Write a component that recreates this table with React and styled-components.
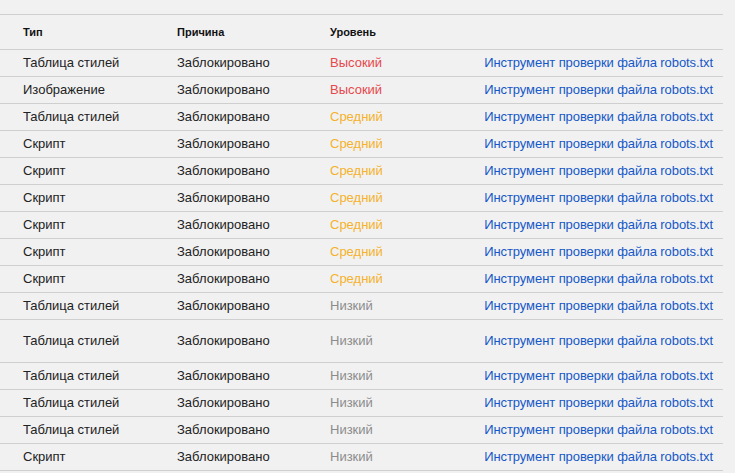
import React from "react";
import styled, { createGlobalStyle } from "styled-components";

const GlobalStyle = createGlobalStyle`
  body {
    margin: 0;
    background: #f1f1f1;
    font-family: "Liberation Sans", Arial, sans-serif;
  }
`;

const Wrapper = styled.div`
  width: 723px;
  padding-top: 14px;
`;

const Table = styled.table`
  width: 100%;
  border-collapse: collapse;
  border-top: 1px solid #cfcfcf;
  font-size: 13px;
  color: #222;
`;

const HeadCell = styled.th`
  height: 34px;
  padding: 0;
  padding-left: ${({ first }) => (first ? "23px" : "0")};
  text-align: left;
  font-size: 11px;
  font-weight: bold;
  color: #111;
  width: ${({ w }) => w || "auto"};
`;

const Row = styled.tr`
  border-top: 1px solid #cfcfcf;
  border-bottom: 1px solid #cfcfcf;
  height: ${({ tall }) => (tall ? "43px" : "27px")};
`;

const Cell = styled.td`
  padding: 0 0 2px;
  padding-left: ${({ first }) => (first ? "23px" : "0")};
  vertical-align: middle;
`;

const levelColors = {
  "Высокий": "#e8474c",
  "Средний": "#f5b22c",
  "Низкий": "#8c8c8c",
};

const Level = styled(Cell)`
  color: ${({ level }) => levelColors[level]};
`;

const LinkCell = styled(Cell)`
  text-align: right;
  padding-right: 10px;
`;

const Link = styled.a`
  color: #1558c8;
  text-decoration: none;
  letter-spacing: -0.08px;
`;

const rows = [
  ["Таблица стилей", "Высокий"],
  ["Изображение", "Высокий"],
  ["Таблица стилей", "Средний"],
  ["Скрипт", "Средний"],
  ["Скрипт", "Средний"],
  ["Скрипт", "Средний"],
  ["Скрипт", "Средний"],
  ["Скрипт", "Средний"],
  ["Скрипт", "Средний"],
  ["Таблица стилей", "Низкий"],
  ["Таблица стилей", "Низкий", true],
  ["Таблица стилей", "Низкий"],
  ["Таблица стилей", "Низкий"],
  ["Таблица стилей", "Низкий"],
  ["Скрипт", "Низкий"],
];

const App = () => {
  return (
    <Wrapper>
      <GlobalStyle />
      <Table>
        <thead>
          <tr>
            <HeadCell first w="154px">Тип</HeadCell>
            <HeadCell w="153px">Причина</HeadCell>
            <HeadCell w="120px">Уровень</HeadCell>
            <HeadCell />
          </tr>
        </thead>
        <tbody>
          {rows.map(([type, level, tall], i) => (
            <Row key={i} tall={tall}>
              <Cell first>{type}</Cell>
              <Cell>Заблокировано</Cell>
              <Level level={level}>{level}</Level>
              <LinkCell>
                <Link href="#">Инструмент проверки файла robots.txt</Link>
              </LinkCell>
            </Row>
          ))}
        </tbody>
      </Table>
    </Wrapper>
  );
};

export default App;
